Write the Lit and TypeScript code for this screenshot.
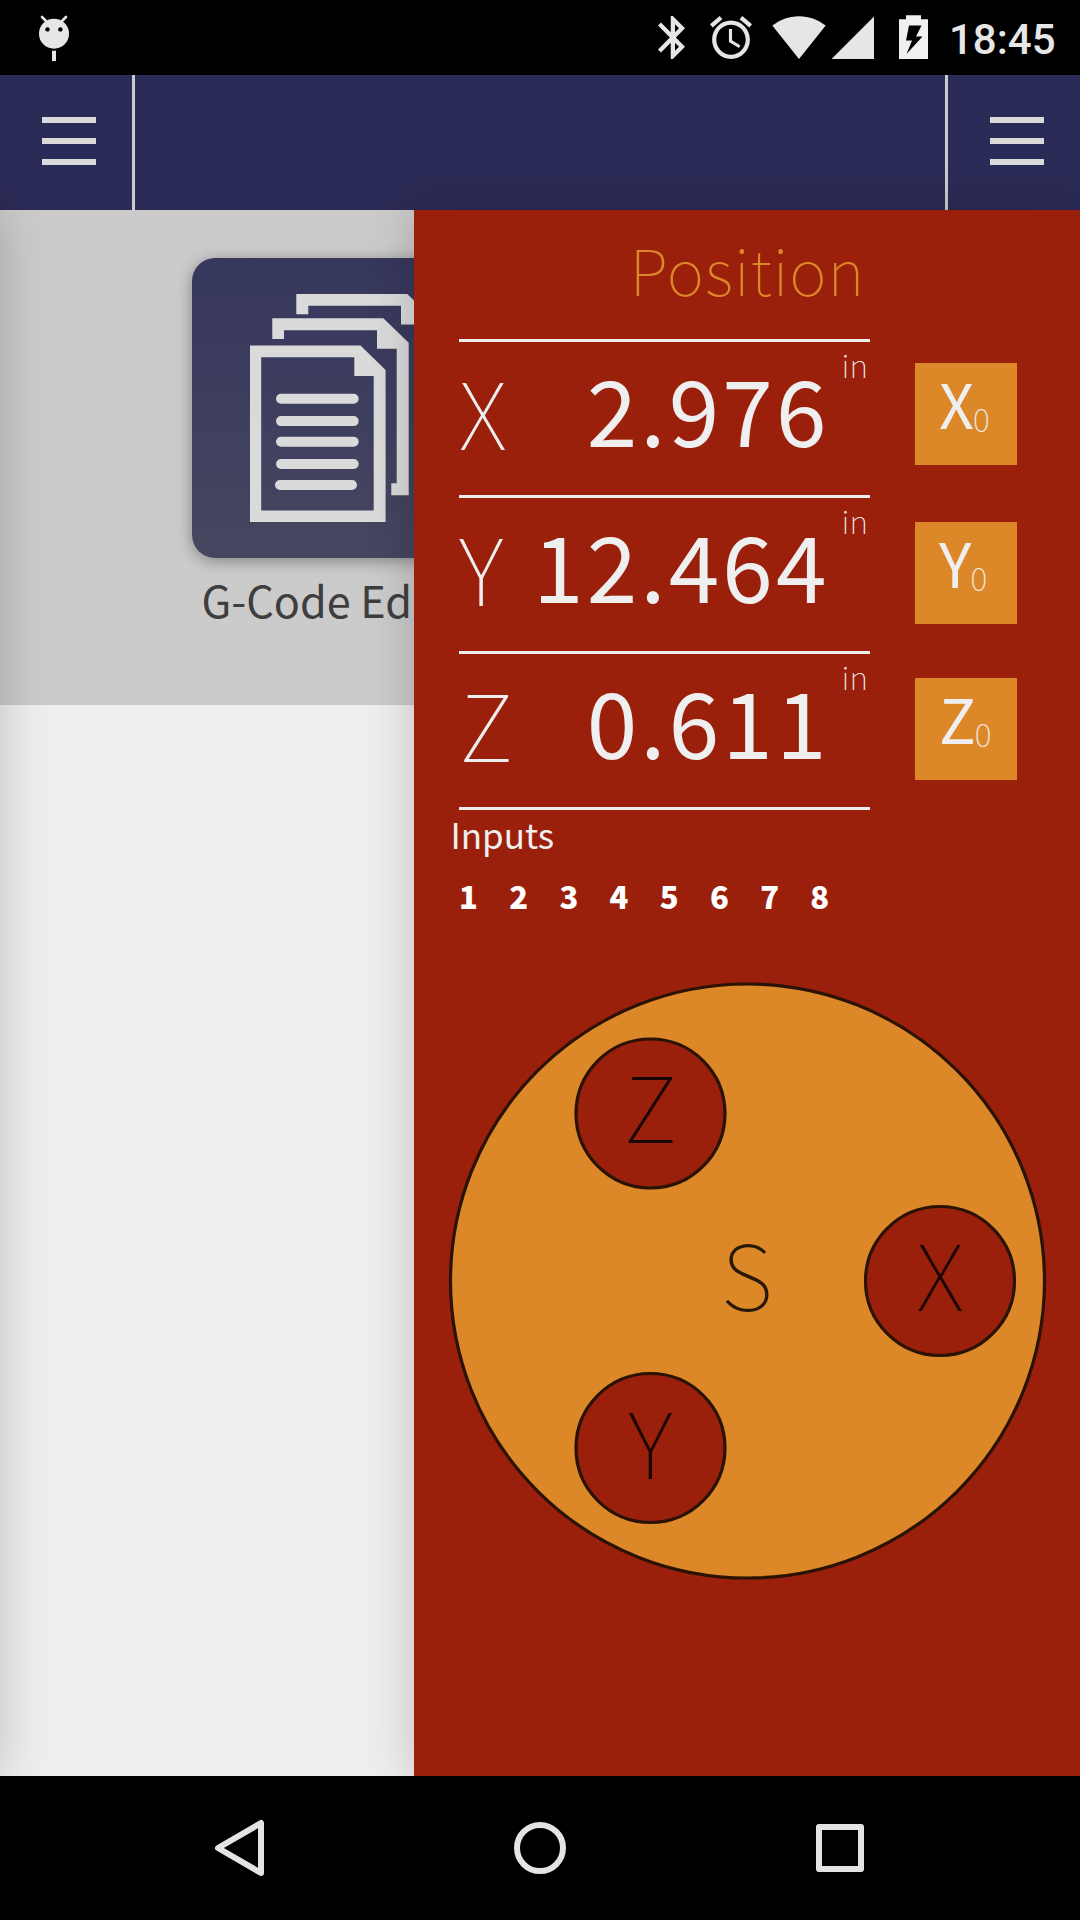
import { LitElement, html, svg, css } from "lit";
import { customElement, property } from "lit/decorators.js";

@customElement("status-bar")
class StatusBar extends LitElement {
  static styles = css`
    :host {
      display: flex;
      height: 75px;
      box-sizing: border-box;
      padding: 0 24px 0 38px;
      background: #000;
      color: #e6e6e6;
    }
    svg {
      display: block;
      fill: currentColor;
      flex: none;
    }
    .bug { margin-top: 15px; }
    .spacer { flex: 1; }
    .bluetooth { margin: 16px 25px 0 0; }
    .alarm { margin: 16px 20px 0 0; }
    .wifi { margin: 16px 5px 0 0; }
    .signal { margin: 16px 25px 0 0; }
    .battery { margin: 15px 21px 0 0; color: #f0f0f0; }
    .clock {
      font: 500 42px/49px Roboto, sans-serif;
      margin-top: 15px;
      width: 107px;
      white-space: nowrap;
    }
  `;
  render() {
    return html`
      <svg class="bug" width="32" height="48" viewBox="38 15 32 48">
        <circle cx="54" cy="33.7" r="15" />
        <path d="M42 17l5 5M66 17l-5 5" stroke="currentColor" stroke-width="2.6" stroke-linecap="round" />
        <rect x="52" y="50.7" width="4" height="10.4" />
        <circle cx="47.5" cy="29.4" r="2.2" fill="#000" />
        <circle cx="60.4" cy="29.4" r="2.2" fill="#000" />
      </svg>
      <div class="spacer"></div>
      <svg class="bluetooth" width="27" height="43" viewBox="5 2 12.71 20" preserveAspectRatio="none">
        <path d="M17.71 7.71L12 2h-1v7.59L6.41 5 5 6.41 10.59 12 5 17.59 6.41 19 11 14.41V22h1l5.71-5.71-4.3-4.29 4.3-4.29zM13 5.83l1.88 1.88L13 9.59V5.83zm1.88 10.46L13 18.17v-3.76l1.88 1.88z" />
      </svg>
      <svg class="alarm" width="42" height="43" viewBox="2 1.86 20 20.14" preserveAspectRatio="none">
        <path d="M22 5.72l-4.6-3.86-1.29 1.53 4.6 3.86L22 5.72zM7.88 3.39L6.6 1.86 2 5.71l1.29 1.53 4.59-3.85zM12.5 8H11v6l4.75 2.85.75-1.23-4-2.37V8zM12 4c-4.97 0-9 4.03-9 9s4.02 9 9 9c4.97 0 9-4.03 9-9s-4.03-9-9-9zm0 16c-3.87 0-7-3.13-7-7s3.13-7 7-7 7 3.13 7 7-3.13 7-7 7z" />
      </svg>
      <svg class="wifi" width="54" height="43" viewBox="0 0 54 43">
        <path d="M27 43L0.3 9.6C7.5 4 16.5 0.2 27 0.2S46.5 4 53.7 9.6z" />
      </svg>
      <svg class="signal" width="43" height="43" viewBox="0 0 43 43">
        <path d="M0.5 43L43 0.5V43z" />
      </svg>
      <svg class="battery" width="29" height="44" viewBox="0 0 29 44">
        <path fill-rule="evenodd" d="M7 0.3H22V4.3H29V44H0V4.3H7zM10 10.5L7 25.5H13L7.5 39L23.5 21.5H17L22.5 10.5z" />
      </svg>
      <div class="clock">18:45</div>
    `;
  }
}

@customElement("menu-button")
class MenuButton extends LitElement {
  static styles = css`
    :host {
      display: flex;
      flex-direction: column;
      justify-content: center;
      gap: 15px;
      box-sizing: border-box;
      width: 132px;
      padding-bottom: 3px;
    }
    .bar { width: 54px; height: 6px; background: #dadada; }
  `;
  render() {
    return html`<div class="bar"></div><div class="bar"></div><div class="bar"></div>`;
  }
}

@customElement("gcode-tile")
class GcodeTile extends LitElement {
  static styles = css`
    :host { display: block; width: 300px; }
    .tile {
      height: 300px;
      border-radius: 23px;
      background: linear-gradient(#36375d, #464660);
      box-shadow: 0 3px 15px rgba(0, 0, 0, 0.35);
    }
    svg { display: block; }
    .label {
      padding-left: 9.5px;
      white-space: nowrap;
      color: #3e3e3e;
      font-size: 43.2px;
      line-height: 83px;
    }
  `;
  render() {
    return html`
      <div class="tile">
        <svg width="300" height="300" viewBox="192 258 300 300" fill="#dadada">
          <path d="M296.3 294H407.3L432.7 318.4V471H415.3V459H420.7V324.4H401V305.7H308.3V314.3H296.3z" />
          <path d="M272.3 318.3H383.3L408.7 342.7V495.3H391.3V483.3H396.7V348.7H377V330.3H284V339H272.3z" />
          <path fill-rule="evenodd" d="M250 345.4H360.5L385.6 370V522H250zM261.2 357.2V510.4H373.7V376H354.3V357.2z" />
          <g stroke="#dadada" stroke-width="10" stroke-linecap="round">
            <path d="M281 398.7H353.7M281 421.1H353.7M281 441.7H353.7M281 464H353.7M280 485H352" />
          </g>
        </svg>
      </div>
      <div class="label">G-Code Ed</div>
    `;
  }
}

@customElement("axis-row")
class AxisRow extends LitElement {
  @property() axis = "";
  @property() value = "";
  static styles = css`
    :host {
      display: grid;
      grid-template-columns: 411px 102px;
      column-gap: 45px;
      height: 156px;
      color: #efefef;
    }
    .readout {
      display: grid;
      grid-template-columns: 60px 1fr 40.5px;
      align-items: start;
      border-top: 3px solid #efefef;
    }
    .axis { font-size: 92px; font-weight: 100; line-height: 135px; }
    .value {
      font-size: 91px;
      line-height: 131px;
      letter-spacing: 3.1px;
      text-align: right;
      white-space: nowrap;
      justify-self: end;
    }
    .unit {
      font-size: 32px;
      font-weight: 100;
      line-height: 45px;
      text-align: right;
      padding-right: 2px;
    }
    .zero {
      display: flex;
      align-items: baseline;
      box-sizing: border-box;
      width: 102px;
      height: 102px;
      padding-left: 24px;
      margin-top: 27px;
      background: #dd8828;
      font-size: 61px;
      font-weight: 400;
      line-height: 79px;
    }
    :host(.first) .zero { margin-top: 24px; }
    .sub {
      font-size: 32px;
      font-weight: 100;
      line-height: 40px;
      margin-left: -1px;
      position: relative;
      top: 3px;
    }
  `;
  render() {
    return html`
      <div class="readout">
        <div class="axis">${this.axis}</div>
        <div class="value">${this.value}</div>
        <div class="unit">in</div>
      </div>
      <div class="zero"><span>${this.axis}</span><span class="sub">0</span></div>
    `;
  }
}

@customElement("jog-wheel")
class JogWheel extends LitElement {
  static styles = css`
    :host { display: block; }
    svg { display: block; }
    .ring { stroke: #2a1204; stroke-width: 3.2; }
    .disc { fill: #dd8828; }
    .knob { fill: #9b200c; }
    .name { font-size: 91px; font-weight: 100; text-anchor: middle; fill: #000; opacity: 0.82; }
  `;
  render() {
    const knobs = [
      { name: "Z", x: 650.5, y: 1113.5, base: 1143 },
      { name: "X", x: 940, y: 1281, base: 1310.5 },
      { name: "Y", x: 650.5, y: 1448, base: 1478.5 },
    ];
    return html`
      <svg width="600" height="600" viewBox="447 981 600 600">
        <circle class="ring disc" cx="747.5" cy="1281" r="297" />
        ${knobs.map(
          (k) => svg`
            <circle class="ring knob" cx=${k.x} cy=${k.y} r="74.5" />
            <text class="name" x=${k.x} y=${k.base}>${k.name}</text>`
        )}
        <text class="name" x="747" y="1310.5">S</text>
      </svg>
    `;
  }
}

@customElement("app-root")
class AppRoot extends LitElement {
  static styles = css`
    :host {
      display: flex;
      flex-direction: column;
      width: 1080px;
      height: 1920px;
      overflow: hidden;
      background: #000;
      font-family: "Noto Sans CJK SC", sans-serif;
    }
    .header {
      display: flex;
      height: 135px;
      background: #2b2b57;
    }
    .menu { padding-left: 42px; box-sizing: border-box; width: 132px; }
    .title { flex: 1; border: solid #cbcbcb; border-width: 0 3px; }
    .body {
      display: flex;
      height: 1566px;
      position: relative;
    }
    .left-drawer {
      position: absolute;
      top: 0;
      left: -666px;
      width: 666px;
      height: 1566px;
      box-shadow: 0 0 45px rgba(0, 0, 0, 0.2);
    }
    .content { width: 414px; height: 1566px; overflow: hidden; background: #eee; }
    .band {
      height: 495px;
      box-sizing: border-box;
      padding: 48px 0 0 192px;
      background: #cbcbcb;
    }
    .drawer {
      position: relative;
      box-sizing: border-box;
      width: 666px;
      height: 1566px;
      padding-left: 45px;
      background: #9b200c;
      box-shadow: 0 0 45px rgba(0, 0, 0, 0.2);
      clip-path: inset(-45px 0 0 -45px);
      color: #efefef;
    }
    .heading {
      height: 129px;
      margin-left: -44px;
      text-align: center;
      font-size: 63.5px;
      font-weight: 100;
      line-height: 117px;
      letter-spacing: 1px;
      color: #dd8828;
    }
    .rule { width: 411px; height: 3px; background: #efefef; }
    .inputs-label { margin-left: -8.5px; font-size: 35px; line-height: 48px; }
    .inputs {
      display: flex;
      padding-top: 14px;
      height: 97px;
      color: #fff;
      font-size: 31px;
      font-weight: 900;
      line-height: 48px;
    }
    .inputs span { width: 50.2px; }
    .wheel { margin: 12px 0 0 -12px; }
    .nav {
      display: flex;
      justify-content: space-between;
      align-items: center;
      height: 144px;
      box-sizing: border-box;
      padding: 0 210px;
      background: #000;
    }
    .nav svg { display: block; fill: none; stroke: #e4e4e4; stroke-width: 6; stroke-linejoin: round; }
  `;
  render() {
    return html`
      <status-bar></status-bar>
      <div class="header">
        <menu-button class="menu"></menu-button>
        <div class="title"></div>
        <menu-button class="menu"></menu-button>
      </div>
      <div class="body">
        <div class="content">
          <div class="band"><gcode-tile></gcode-tile></div>
        </div>
        <div class="left-drawer"></div>
        <div class="drawer">
          <div class="heading">Position</div>
          <axis-row class="first" axis="X" value="2.976"></axis-row>
          <axis-row axis="Y" value="12.464"></axis-row>
          <axis-row axis="Z" value="0.611"></axis-row>
          <div class="rule"></div>
          <div class="inputs-label">Inputs</div>
          <div class="inputs">
            ${[1, 2, 3, 4, 5, 6, 7, 8].map((n) => html`<span>${n}</span>`)}
          </div>
          <jog-wheel class="wheel"></jog-wheel>
        </div>
      </div>
      <div class="nav">
        <svg width="60" height="60" viewBox="0 0 60 60"><path d="M51 5V55L8 30z" /></svg>
        <svg width="60" height="60" viewBox="0 0 60 60"><circle cx="30" cy="30" r="23" /></svg>
        <svg width="60" height="60" viewBox="0 0 60 60"><rect x="9" y="9" width="42" height="42" /></svg>
      </div>
    `;
  }
}
